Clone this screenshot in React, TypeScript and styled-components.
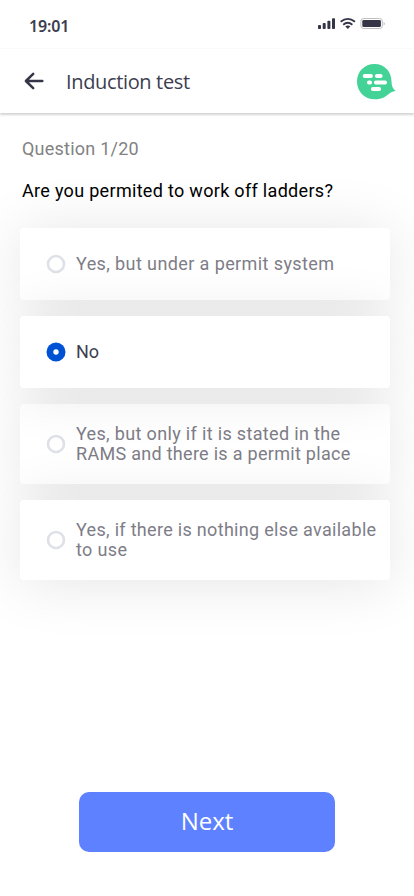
import React, { useState } from "react";
import styled, { createGlobalStyle } from "styled-components";

const GlobalStyle = createGlobalStyle`
  * { box-sizing: border-box; }
  body { margin: 0; background: #fff; }
`;

const Screen = styled.div`
  display: flex;
  flex-direction: column;
  width: 414px;
  height: 896px;
  overflow: hidden;
  background: #fff;
  font-family: Roboto, "Open Sans", sans-serif;
`;

const StatusBar = styled.div`
  display: flex;
  align-items: center;
  justify-content: space-between;
  height: 49px;
  flex: none;
  padding: 3px 29px 0;
  border-bottom: 1px solid #fafafa;
`;

const Clock = styled.span`
  font: 600 16px/20px "Noto Sans", sans-serif;
  letter-spacing: -0.15px;
  color: #3c3e50;
`;

const StatusIcons = styled.svg`
  display: block;
  width: 68px;
  height: 14px;
  margin-top: -4px;
`;

const Header = styled.header`
  display: flex;
  align-items: center;
  height: 64px;
  flex: none;
  padding: 0 18px 0 24px;
  background: #fff;
  box-shadow: 0 2px 2px rgba(0, 0, 0, 0.17);
`;

const BackButton = styled.button`
  display: flex;
  width: 20px;
  height: 20px;
  padding: 0;
  border: 0;
  background: none;
`;

const Title = styled.h1`
  flex: 1;
  margin: 2px 0 0 22px;
  font: 400 20px/28px "Open Sans", sans-serif;
  letter-spacing: -0.35px;
  color: #3c3e50;
`;

const Logo = styled.svg`
  display: block;
  width: 40px;
  height: 38px;
  margin-top: 2px;
`;

const Content = styled.main`
  flex: 1;
  padding: 25px 24px 0 20px;
`;

const Progress = styled.p`
  margin: 0 0 0 2px;
  font-size: 18px;
  line-height: 22px;
  letter-spacing: 0.23px;
  color: #828282;
`;

const Question = styled.h2`
  margin: 20px 0 0 2px;
  font-size: 18px;
  font-weight: 400;
  line-height: 22px;
  letter-spacing: 0.31px;
  color: #000;
`;

const Options = styled.div`
  display: flex;
  flex-direction: column;
  gap: 16px;
  margin-top: 26px;
`;

const Option = styled.button<{ $selected: boolean; $tall: boolean }>`
  position: relative;
  z-index: ${(p) => (p.$selected ? 1 : 0)};
  display: flex;
  align-items: center;
  gap: 10px;
  height: ${(p) => (p.$tall ? 80 : 72)}px;
  padding: 0 0 0 26px;
  border: 0;
  border-radius: 4px;
  background: #fff;
  box-shadow: 0 3px 60px rgba(0, 0, 0, 0.105);
  text-align: left;
  font: 400 18px/20px Roboto, sans-serif;
  color: ${(p) => (p.$selected ? "#3c3e50" : "#7e7d87")};
`;

const Radio = styled.svg`
  display: block;
  flex: none;
  width: 20px;
  height: 20px;
`;

const Line = styled.span<{ $spacing: number }>`
  display: block;
  white-space: nowrap;
  letter-spacing: ${(p) => p.$spacing}px;
`;

const Footer = styled.footer`
  display: flex;
  justify-content: center;
  padding-bottom: 44px;
`;

const NextButton = styled.button`
  width: 256px;
  height: 60px;
  padding: 0 0 2px;
  border: 0;
  border-radius: 10px;
  background: #5e81ff;
  font: 400 24px/58px "Open Sans", sans-serif;
  letter-spacing: -0.1px;
  color: #fff;
`;

type Answer = { text: string; spacing: number }[];

const answers: Answer[] = [
  [{ text: "Yes, but under a permit system", spacing: 0.4 }],
  [{ text: "No", spacing: -0.2 }],
  [
    { text: "Yes, but only if it is stated in the", spacing: 0.34 },
    { text: "RAMS and there is a permit place", spacing: 0.29 },
  ],
  [
    { text: "Yes, if there is nothing else available", spacing: 0.31 },
    { text: "to use", spacing: 0.35 },
  ],
];

export default function App() {
  const [selected, setSelected] = useState(1);
  return (
    <>
      <GlobalStyle />
      <Screen>
        <StatusBar>
          <Clock>19:01</Clock>
          <StatusIcons viewBox="317 17 68 14">
            <g fill="#343648">
              <rect x="318" y="25" width="3" height="4" rx="0.8" />
              <rect x="322.7" y="23" width="3" height="6" rx="0.8" />
              <rect x="327.4" y="20.7" width="3" height="8.3" rx="0.8" />
              <rect x="332" y="18.3" width="3" height="10.7" rx="0.8" />
              <path d="M345.2 26.2q2.8-1.3 5.2 0L347.8 29z" />
              <rect x="362.3" y="20" width="18.6" height="7" rx="1.3" />
            </g>
            <g fill="none" stroke="#343648" strokeWidth="1.8">
              <path d="M340.6 21.8q7.2-5.8 14.4 0M343.2 24.7q4.6-3.8 9.2 0" />
            </g>
            <rect x="360.9" y="18.5" width="21.4" height="10" rx="2.6" fill="none" stroke="#bfbfc1" />
            <path d="M383.6 22v3.4q1.3-.5 1.3-1.7t-1.3-1.7z" fill="#bfbfc1" />
          </StatusIcons>
        </StatusBar>
        <Header>
          <BackButton aria-label="Back">
            <svg width="20" height="20" viewBox="0 0 20 20" fill="none" stroke="#343648" strokeWidth="2.5" strokeLinecap="round" strokeLinejoin="round">
              <path d="M18.3 10H2.2M9.2 2.8L1.9 10l7.3 7.2" />
            </svg>
          </BackButton>
          <Title>Induction test</Title>
          <Logo viewBox="356 63 40 38">
            <path d="M374.500 64C384.500 64 391.500 71.600 391.500 81.500C391.500 86 393 89 395.700 91.100C392 91.300 389.500 93.500 386.500 95.700C383 98.300 379 99.300 374.500 99.300C364.500 99.300 357 91.600 357 81.500C357 71.600 364.500 64 374.500 64Z" fill="#44d397" />
            <g fill="#fff">
              <rect x="362.800" y="74" width="10" height="4" rx="1.800" />
              <rect x="375" y="74" width="7.500" height="4" rx="1.800" />
              <rect x="367" y="80.500" width="5" height="4" rx="1.800" />
              <rect x="374" y="80.500" width="13" height="4" rx="1.800" />
              <rect x="371" y="87" width="10" height="4" rx="1.800" />
            </g>
          </Logo>
        </Header>
        <Content>
          <Progress>Question 1/20</Progress>
          <Question>Are you permited to work off ladders?</Question>
          <Options role="radiogroup">
            {answers.map((lines, i) => (
              <Option
                key={i}
                role="radio"
                aria-checked={i === selected}
                $selected={i === selected}
                $tall={lines.length > 1}
                onClick={() => setSelected(i)}
              >
                <Radio viewBox="0 0 20 20">
                  {i === selected ? (
                    <>
                      <circle cx="10" cy="10" r="9.500" fill="#0052d4" />
                      <circle cx="10" cy="10" r="2.700" fill="#fff" />
                    </>
                  ) : (
                    <circle cx="10" cy="10" r="8" fill="#fff" stroke="#e0e1e8" strokeWidth="2.600" />
                  )}
                </Radio>
                <span>
                  {lines.map((line) => (
                    <Line key={line.text} $spacing={line.spacing}>{line.text}</Line>
                  ))}
                </span>
              </Option>
            ))}
          </Options>
        </Content>
        <Footer>
          <NextButton>Next</NextButton>
        </Footer>
      </Screen>
    </>
  );
}
